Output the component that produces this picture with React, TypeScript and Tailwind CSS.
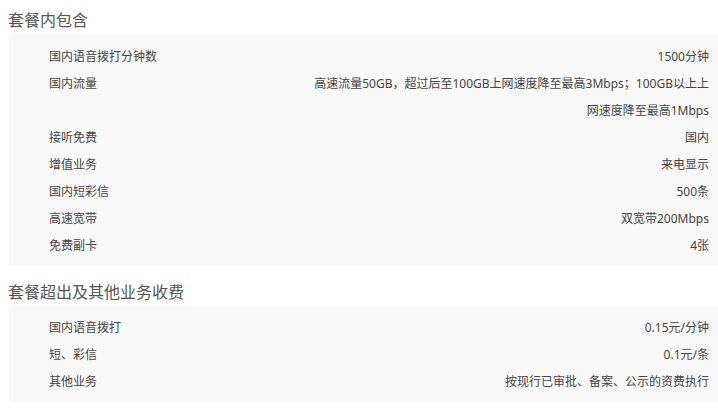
import React from 'react';

interface Row {
  label: string;
  value: string[];
}

const included: Row[] = [
  { label: '国内语音拨打分钟数', value: ['1500分钟'] },
  {
    label: '国内流量',
    value: ['高速流量50GB，超过后至100GB上网速度降至最高3Mbps；100GB以上上', '网速度降至最高1Mbps'],
  },
  { label: '接听免费', value: ['国内'] },
  { label: '增值业务', value: ['来电显示'] },
  { label: '国内短彩信', value: ['500条'] },
  { label: '高速宽带', value: ['双宽带200Mbps'] },
  { label: '免费副卡', value: ['4张'] },
];

const extra: Row[] = [
  { label: '国内语音拨打', value: ['0.15元/分钟'] },
  { label: '短、彩信', value: ['0.1元/条'] },
  { label: '其他业务', value: ['按现行已审批、备案、公示的资费执行'] },
];

const Section = ({ title, rows, className }: { title: string; rows: Row[]; className: string }) => (
  <section>
    <h2 className="pl-[8px] h-[28px] leading-[28px] text-[16px] text-[#555]">{title}</h2>
    <div className={`ml-[9px] bg-[#f9f9f9] pl-[40px] pr-[9px] ${className}`}>
      {rows.map((row) => (
        <div key={row.label} className="flex justify-between text-[12px] leading-[27px] text-[#444]">
          <span className="whitespace-nowrap">{row.label}</span>
          <div className="text-right whitespace-nowrap">
            {row.value.map((line) => (
              <div key={line}>{line}</div>
            ))}
          </div>
        </div>
      ))}
    </div>
  </section>
);

export default function App() {
  return (
    <div
      className="w-[718px] h-[408px] bg-white pt-[6px] overflow-hidden"
      style={{ fontFamily: '"Noto Sans", "Noto Sans CJK SC", sans-serif' }}
    >
      <Section title="套餐内包含" rows={included} className="pt-[9px] pb-[6px]" />
      <div className="h-[13px]" />
      <Section title="套餐超出及其他业务收费" rows={extra} className="pt-[8px] pb-[7px]" />
    </div>
  );
}
